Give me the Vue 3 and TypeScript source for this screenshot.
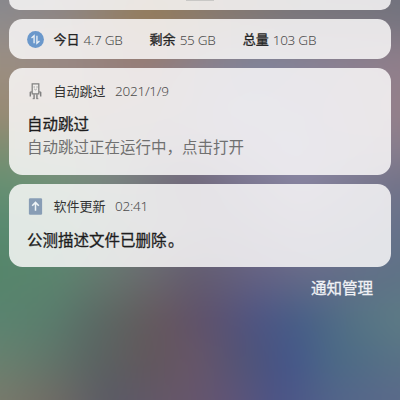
<script setup lang="ts">
interface Band {
  y: number
  stops: [string, number][]
}

interface Usage {
  label: string
  value: string
}

// Colour bands of the blurred wallpaper, each one fading into the next
const bands: Band[] = [
  { y: 0, stops: [['#87878d', 0], ['#8b8585', 70], ['#927e62', 150], ['#85796f', 220], ['#77757b', 300], ['#72737d', 400]] },
  { y: 14, stops: [['#8d8b8e', 0], ['#8f8784', 60], ['#957c57', 150], ['#8a7a6b', 210], ['#7c7679', 290], ['#74747f', 400]] },
  { y: 64, stops: [['#9b8f82', 0], ['#998885', 70], ['#967c78', 145], ['#898290', 210], ['#80849a', 260], ['#8a8193', 330], ['#917f8b', 400]] },
  { y: 115, stops: [['#988a73', 0], ['#988879', 60], ['#8f8085', 160], ['#8688a4', 240], ['#8c859e', 320], ['#957f88', 400]] },
  { y: 150, stops: [['#7c8e70', 0], ['#839080', 50], ['#80798a', 180], ['#8b88a8', 290], ['#877d8c', 400]] },
  { y: 180, stops: [['#689072', 0], ['#729277', 50], ['#7a8580', 110], ['#706779', 190], ['#7b7690', 240], ['#8885a0', 300], ['#747388', 400]] },
  { y: 225, stops: [['#588a70', 0], ['#5e8a73', 60], ['#74777d', 150], ['#6f6b82', 220], ['#7c7893', 300], ['#66728a', 400]] },
  { y: 270, stops: [['#55856a', 0], ['#5c856f', 60], ['#677870', 110], ['#6a6b70', 150], ['#645d70', 195], ['#666384', 260], ['#686c89', 310], ['#5f7287', 400]] },
  { y: 320, stops: [['#5a8470', 0], ['#5a7d6d', 50], ['#5a6c66', 90], ['#60605f', 130], ['#66565f', 165], ['#5d516e', 210], ['#4d5584', 260], ['#475f87', 300], ['#557485', 360], ['#5d7b85', 400]] },
  { y: 360, stops: [['#68816f', 0], ['#62776b', 45], ['#5a6462', 95], ['#62575c', 150], ['#675668', 195], ['#4f5379', 250], ['#44568a', 290], ['#4b6a86', 335], ['#587286', 400]] },
  { y: 400, stops: [['#787a6c', 0], ['#706c65', 50], ['#5a5a65', 110], ['#675669', 180], ['#615475', 225], ['#4b5487', 280], ['#53658a', 340], ['#5b6a8a', 400]] },
]

const bandStyle = (i: number) => {
  const { y, stops } = bands[i]
  const previous = i > 0 ? bands[i - 1].y : 0
  // The wallpaper reaches 40px past every edge so that its blur stays even
  const background = `linear-gradient(90deg, ${stops.map(([c, x]) => `${c} ${x + 40}px`).join(', ')})`
  return i === 0
    ? { background }
    : { background, maskImage: `linear-gradient(180deg, transparent ${previous + 40}px, #000 ${y + 40}px)` }
}

const usage: Usage[] = [
  { label: '今日', value: '4.7 GB' },
  { label: '剩余', value: '55 GB' },
  { label: '总量', value: '103 GB' },
]
</script>

<template>
  <main class="shade">
    <div class="wallpaper">
      <div v-for="(band, i) in bands" :key="band.y" class="band" :style="bandStyle(i)"></div>
    </div>

    <div class="content">
      <section class="card panel"><span class="handle"></span></section>

      <section class="card traffic">
        <svg class="icon" viewBox="0 0 18 18">
          <circle cx="9" cy="9" r="8.9" fill="#6b98cb" />
          <path d="M4.8 7.4 7.5 5v8M10.5 5v8l2.7-2.4" fill="none" stroke="#edf2f7" stroke-width="1.4" />
        </svg>
        <div v-for="item in usage" :key="item.label" class="usage">
          <b>{{ item.label }}</b><span>{{ item.value }}</span>
        </div>
      </section>

      <section class="card skip">
        <header>
          <svg class="icon" viewBox="0 0 18 18">
            <g fill="none" stroke="#808080" stroke-width="1">
              <path d="M5.5 1h7v10.5h-7z" fill="#efedeb" stroke-width="1.3" />
              <path d="M5 9.2 3.5 10v4.2M13 9.2l1.5.8v4.2M7.5 12v4.8M10.5 12v4.8" stroke-width="1.5" />
              <path d="M6 16.6h2M10 16.6h2" />
              <path d="M7.5 6.2 9 7.3l1.5-1.1" stroke-width=".7" />
            </g>
            <path d="M7 3.6h1.2v1.2H7zM10 3.6h1.2v1.2H10z" fill="#858585" />
          </svg>
          <span class="app">自动跳过</span>
          <time>2021/1/9</time>
        </header>
        <h2>自动跳过</h2>
        <p>自动跳过正在运行中，点击打开</p>
      </section>

      <section class="card update">
        <header>
          <svg class="icon" viewBox="0 0 18 18">
            <rect x="2" y=".2" width="14" height="17.6" rx="1.3" fill="#889db5" />
            <path d="M9 13.4V5M5.5 8.2 9 4.7l3.5 3.5" fill="none" stroke="#f0f5f7" stroke-width="1.6" />
          </svg>
          <span class="app">软件更新</span>
          <time>02:41</time>
        </header>
        <h2>公测描述文件已删除<span class="stop">。</span></h2>
      </section>

      <div class="manage">通知管理</div>
    </div>
  </main>
</template>

<style>
body {
  margin: 0;
}
</style>

<style scoped>
.shade {
  position: relative;
  width: 400px;
  height: 400px;
  overflow: hidden;
  font-family: 'Noto Sans', 'Noto Sans CJK SC', sans-serif;
  white-space: nowrap;
}

.wallpaper {
  position: absolute;
  inset: -40px;
  filter: blur(12px);
}

.band {
  position: absolute;
  inset: 0;
}

.content {
  position: relative;
  display: flex;
  flex-direction: column;
  padding: 0 9px;
}

.card {
  box-sizing: border-box;
  border-radius: 13.5px;
  background: rgba(252, 251, 251, 0.83);
  padding: 0 18px;
}

.panel {
  height: 10.4px;
  border-radius: 0 0 13.5px 13.5px;
  display: flex;
  justify-content: center;
}

.handle {
  width: 28px;
  height: 1px;
  background: #c9c8c6;
}

.traffic {
  height: 40.4px;
  margin-top: 8.6px;
  display: flex;
  align-items: center;
}

.icon {
  width: 17px;
  height: 17px;
  flex: none;
  margin-right: 9.5px;
}

.usage {
  display: flex;
  align-items: center;
  font-size: 13px;
  line-height: 20px;
  margin-right: 27px;
}

.usage b {
  font-family: 'Noto Sans CJK SC', sans-serif;
  font-weight: 400;
  -webkit-text-stroke: 0.3px #242424;
  color: #242424;
  margin-right: 4px;
}

.usage span,
time {
  font-size: 13.5px;
  letter-spacing: -0.24px;
  font-weight: 300;
  color: #4c4c4c;
}

.usage span {
  position: relative;
  top: 0.5px;
}

.skip {
  height: 106.8px;
  margin-top: 8.8px;
  padding-top: 13px;
}

.update {
  height: 83.6px;
  margin-top: 8.6px;
  padding-top: 12.6px;
}

header {
  display: flex;
  align-items: center;
  height: 20px;
  font-size: 13px;
  line-height: 20px;
}

.app {
  font-family: 'Noto Sans CJK SC', sans-serif;
  color: #333;
  margin-right: 9.5px;
}

h2 {
  margin: 10px 0 0;
  font-family: 'Noto Sans CJK SC', sans-serif;
  font-size: 15.5px;
  line-height: 24px;
  font-weight: 400;
  -webkit-text-stroke: 0.28px #1d1d1d;
  color: #1d1d1d;
}

.update h2 {
  margin-top: 10.6px;
}

.stop {
  margin-left: 1.5px;
}

p {
  margin: 0;
  font-family: 'Noto Sans CJK SC', sans-serif;
  font-size: 15.5px;
  line-height: 23px;
  font-weight: 400;
  color: #707070;
}

.manage {
  align-self: flex-end;
  margin: 8px 18px 0 0;
  font-family: 'Noto Sans CJK SC', sans-serif;
  font-size: 15.5px;
  line-height: 24px;
  font-weight: 400;
  -webkit-text-stroke: 0.3px #f0f1f5;
  color: #f0f1f5;
}
</style>
